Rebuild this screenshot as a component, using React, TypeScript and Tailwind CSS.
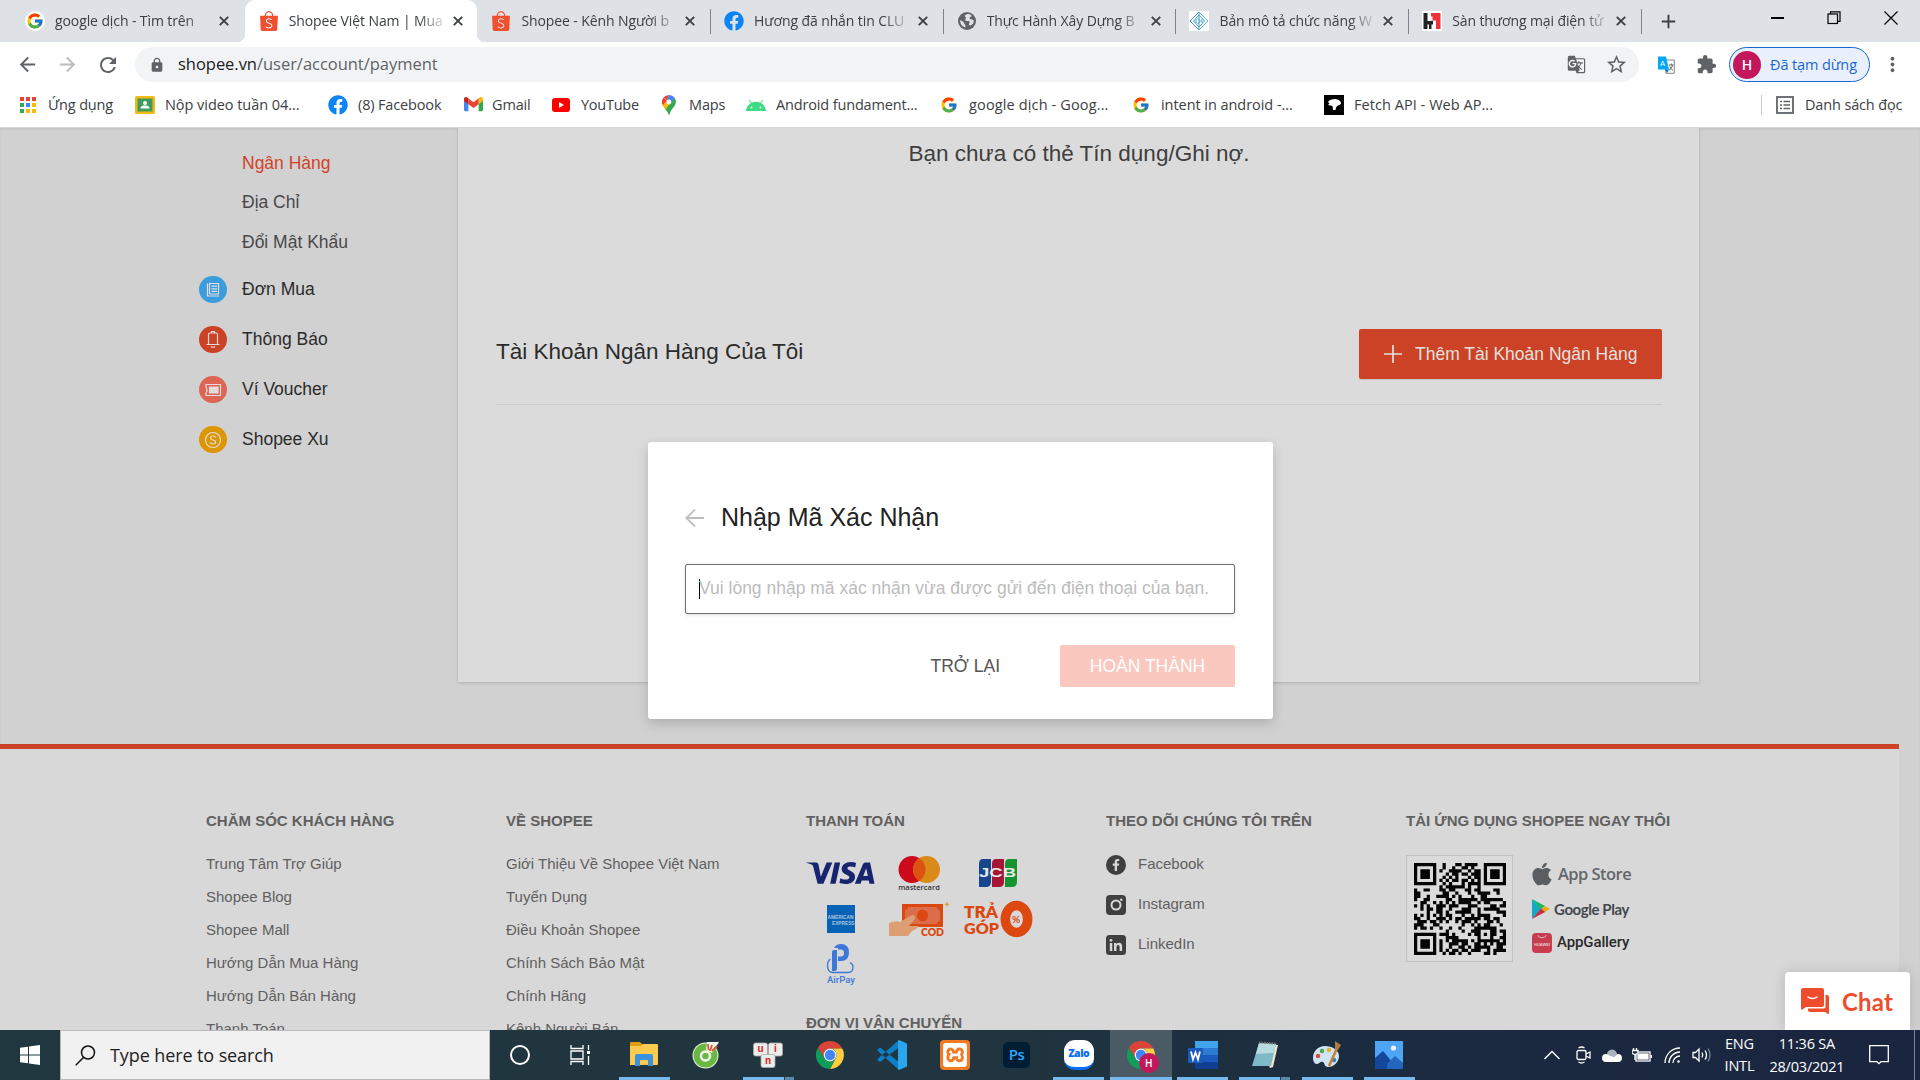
import React from "react";
import { FcGoogle } from "react-icons/fc";
import {
  MdArrowBack,
  MdArrowForward,
  MdRefresh,
  MdLock,
  MdStarBorder,
  MdExtension,
  MdMoreVert,
  MdGTranslate,
  MdAdd,
} from "react-icons/md";
import { FaFacebook, FaApple, FaFacebookF } from "react-icons/fa";
import { SiShopee, SiVisa, SiXampp } from "react-icons/si";

const ui = "font-['Open_Sans','Noto_Sans',sans-serif]";

/* ---------- logos ---------- */

function ChromeLogo({ className }: { className?: string }) {
  return (
    <svg viewBox="0 0 24 24" className={className}>
      <path d="M1.6 6A12 12 0 0 1 22.6 6.5H12A5.5 5.5 0 0 0 7.2 14.75Z" fill="#db4437" />
      <path d="M22.6 6.5A12 12 0 0 1 12 24L16.8 14.75A5.5 5.5 0 0 0 12 6.5Z" fill="#ffcd40" />
      <path d="M12 24A12 12 0 0 1 1.6 6L7.2 14.75A5.5 5.5 0 0 0 16.8 14.75Z" fill="#0f9d58" />
      <circle cx="12" cy="12" r="5.5" fill="#f1f1f1" />
      <circle cx="12" cy="12" r="4.4" fill="#4285f4" />
    </svg>
  );
}

function GlobeIcon() {
  return (
    <svg viewBox="0 0 20 20" className="size-5">
      <circle cx="10" cy="10" r="9" fill="#5f6368" />
      <path d="M10.5 3c-3 1-3.500 2-2 3 1.500 1-1 2 0 3.500 1 1 3 0 4 1 .8 1-1 2-.5 3.500l2 .5c2-1.500 3-3 2.800-5-.8-.3-1.500-1.300-2.500-1.300-1.200 0-2-.8-1.500-1.800.5-1 1.500-.7 2-1.500-1-1.500-2.800-2-4.300-1.900zM3.200 9c1 .8 2.500 1 3.300 2 .7 1 .5 1.800 1.500 2.500.7.600.5 1.500.5 2.800-3.500-.5-5.600-3.800-5.300-7.300z" fill="#dee1e6" />
    </svg>
  );
}

function DiamondIcon() {
  return (
    <svg viewBox="0 0 20 20" className="size-5 bg-white" fill="none" strokeWidth="1">
      <path d="M10 1L1 10l9 9" stroke="#4a86c0" />
      <path d="M10 1l9 9-9 9" stroke="#4cc0dc" />
      <path d="M10 4l-5.500 6L10 16l5.500-6zM10 2v16M7 8v4M13 8v4M8.500 7l3 3-3 3" stroke="#4a9fc8" />
    </svg>
  );
}

function HIcon() {
  return (
    <svg viewBox="0 0 20 20" className="size-5">
      <rect width="20" height="20" fill="#fff" />
      <path d="M1.500 2h4v8h5.500v3.500H9.500V18H1.500z" fill="#222" />
      <path d="M9 2h9.500v16h-4.500V9.500H9z" fill="#ee3338" />
      <path d="M5.500 13.500H7V18H5.500zM9 5.500h1.500V9.500H9z" fill="#fff" />
    </svg>
  );
}

function AndroidIcon() {
  return (
    <svg viewBox="0 0 20 12" className="w-5">
      <path d="M0 12a10 10 0 0 1 4.800-7.800L3 1.200l.8-.5 1.800 3.100a11 11 0 0 1 8.800 0L16.200.7l.8.5-1.800 3A10 10 0 0 1 20 12z" fill="#3ddc84" />
      <circle cx="5.500" cy="8.500" r=".9" fill="#fff" />
      <circle cx="14.500" cy="8.500" r=".9" fill="#fff" />
    </svg>
  );
}

function AppsIcon() {
  const colors = ["#ea4335", "#ea4335", "#ea4335", "#34a853", "#4285f4", "#fbbc04", "#34a853", "#fbbc04", "#fbbc04"];
  return (
    <div className="grid grid-cols-3 gap-[2px]">
      {colors.map((c, i) => (
        <span key={i} className="size-1" style={{ background: c }} />
      ))}
    </div>
  );
}

function ClassroomIcon() {
  return (
    <svg viewBox="0 0 20 20" className="size-5">
      <rect y="1" width="20" height="18" rx="1.500" fill="#f4b912" />
      <rect x="2.500" y="3.500" width="15" height="13" fill="#3f9b5c" />
      <circle cx="10" cy="8" r="2" fill="#fff" />
      <path d="M5.500 13.500c0-2.500 2-3 4.500-3s4.500.5 4.500 3z" fill="#fff" />
    </svg>
  );
}

function GmailIcon() {
  return (
    <svg viewBox="0 0 24 18" className="w-[19px]">
      <path d="M0 3v13.500C0 17.300.7 18 1.600 18H5.500V7z" fill="#4285f4" />
      <path d="M18.500 7v11h3.900c.9 0 1.600-.7 1.600-1.500V3z" fill="#34a853" />
      <path d="M18.500 1.600V9L24 5V2.500c0-2-2.400-3.200-4-2z" fill="#fbbc04" />
      <path d="M5.500 9V1.600L12 6.500l6.500-4.900V9L12 13.800z" fill="#ea4335" />
      <path d="M0 2.500V5l5.500 4V1.600L4 .5c-1.600-1.200-4 0-4 2z" fill="#c5221f" />
    </svg>
  );
}

function YoutubeIcon() {
  return (
    <svg viewBox="0 0 18 14" className="w-[18px]">
      <rect width="18" height="14" rx="3" fill="#f00" />
      <path d="M7 4l5 3-5 3z" fill="#fff" />
    </svg>
  );
}

function MapsIcon() {
  return (
    <svg viewBox="0 0 14 20" className="h-5">
      <path d="M7 0a7 7 0 0 0-5.400 2.500L5 5.400z" fill="#ea4335" />
      <path d="M7 0l-2 5.400 4 3L12.800 3A7 7 0 0 0 7 0z" fill="#4285f4" />
      <path d="M1.600 2.500A7 7 0 0 0 .8 10.500L5 6z" fill="#ea4335" />
      <path d="M.8 10.500c.6 1.300 1.600 2.600 2.600 4l6-6.500L5 5.800z" fill="#fbbc04" />
      <path d="M12.800 3c2 3.500 1 6.500-1 9C9.500 14.800 8.500 16 7.500 19.500c-.3.7-.7.700-1 0-.6-2-1.600-3.500-3.100-5z" fill="#34a853" />
      <circle cx="7" cy="7" r="2.400" fill="#fff" />
    </svg>
  );
}

function MdnIcon() {
  return (
    <svg viewBox="0 0 20 20" className="size-5">
      <rect width="20" height="20" fill="#000" />
      <path d="M4 7c1-2 4-3 7-3 3 .2 6 2 6 4 0 1.500-2 2-3 2.500-1.500.8-2 2-2.500 4.500H9l-.5-4L4 10l1.500-1.500z" fill="#fff" />
    </svg>
  );
}

function ListIcon() {
  return (
    <svg viewBox="0 0 18 18" className="size-[18px]" fill="none" stroke="#5f6368" strokeWidth="1.800">
      <rect x="1" y="1" width="16" height="16" />
      <path d="M4 5.500h2M7.500 5.500H14M4 9h2M7.500 9H14M4 12.500h2M7.500 12.500H14" strokeWidth="1.500" />
    </svg>
  );
}

function TranslateExt() {
  return (
    <svg viewBox="0 0 18 18" className="size-[18px]">
      <path d="M8 4h9.300v13.300H9z" fill="#fff" stroke="#666" strokeWidth=".8" />
      <path d="M12 9h4.500M14.300 7.500V9M15.500 9c-.5 3-2 4.500-3.500 5M13 10.500c.6 1.800 1.500 3 3 3.800" stroke="#555" strokeWidth=".9" fill="none" />
      <path d="M1 .5h8l3 13H1z" fill="#03a9f4" />
      <path d="M8 13.500h4L10 17z" fill="#0277bd" />
      <text x="3" y="10" fontSize="8" fill="#fff" fontFamily="Open Sans">A</text>
    </svg>
  );
}

/* ---------- browser chrome ---------- */

const tabs: { title: string; icon: React.ReactNode; active?: boolean; sep?: boolean }[] = [
  { title: "google dịch - Tìm trên", icon: <span className="-ml-[1px] flex size-5 items-center justify-center rounded-full bg-white"><FcGoogle size={18} /></span> },
  { title: "Shopee Việt Nam | Mua", icon: <SiShopee size={20} color="#f1502f" />, active: true },
  { title: "Shopee - Kênh Người b", icon: <SiShopee size={20} color="#f1502f" />, sep: true },
  { title: "Hương đã nhắn tin CLU", icon: <FaFacebook size={20} color="#0d84f5" />, sep: true },
  { title: "Thực Hành Xây Dựng B", icon: <GlobeIcon />, sep: true },
  { title: "Bản mô tả chức năng W", icon: <DiamondIcon />, sep: true },
  { title: "Sàn thương mại điện tử", icon: <HIcon />, sep: true },
];

function CloseX() {
  return (
    <svg viewBox="0 0 10 10" className="size-[10px]" stroke="#3c4043" strokeWidth="1.900">
      <path d="M.8.8l8.400 8.400M9.200.8L.8 9.200" />
    </svg>
  );
}

function TabStrip() {
  return (
    <div className="flex h-[42px] bg-[#dee1e6] pl-3">
      {tabs.map((t, i) => (
        <div key={i} className={"relative flex h-[42px] w-[232.7px] shrink-0 items-center pl-[14px] " + (t.active ? "rounded-t-[10px] bg-white" : "")}>
          {t.active && (
            <>
              <span className="absolute -left-2 bottom-0 size-2 bg-[radial-gradient(circle_at_0_0,#dee1e6_8px,#fff_8.500px)]" />
              <span className="absolute -right-2 bottom-0 size-2 bg-[radial-gradient(circle_at_100%_0,#dee1e6_8px,#fff_8.500px)]" />
            </>
          )}
          {t.icon}
          <span className="ml-[10px] w-[158px] whitespace-nowrap text-[14px] leading-6 tracking-[-0.1px] text-[#3c4043] [mask-image:linear-gradient(to_right,#000_82%,transparent_101%)]">
            {t.title}
          </span>
          <span className="ml-[6px]"><CloseX /></span>
          {t.sep && <span className="absolute -right-px top-[9px] h-[25px] w-px bg-[#808387]" />}
        </div>
      ))}
      <div className="ml-4 flex items-center">
        <MdAdd size={23} color="#3c4043" />
      </div>
      <div className="ml-[91px] flex h-9 items-center">
        <span className="h-[1.500px] w-[13px] bg-black" />
        <svg viewBox="0 0 14 14" className="ml-[43px] size-[14px]" fill="none" stroke="#000" strokeWidth="1.200">
          <rect x="1" y="3" width="9.500" height="9.500" />
          <path d="M3.500 3V.8H13v9.500h-2.500" />
        </svg>
        <svg viewBox="0 0 14 14" className="ml-[43px] size-[14px]" stroke="#000" strokeWidth="1.200">
          <path d="M.5.5l13 13M13.500.5l-13 13" />
        </svg>
      </div>
    </div>
  );
}

function Toolbar() {
  return (
    <div className="flex h-[45px] items-center bg-white pl-[16px]">
      <MdArrowBack size={23} color="#5f6368" />
      <MdArrowForward size={23} color="#babcbe" className="ml-[17px]" />
      <MdRefresh size={24} color="#5f6368" className="ml-[17px]" />
      <div className="ml-[15px] flex h-[35px] w-[1504px] items-center rounded-full bg-[#f1f3f4] pl-[14px]">
        <MdLock size={16} color="#5f6368" />
        <span className="ml-[13px] text-[16.500px] tracking-[-0.03px] text-[#5f6368]">
          <span className="text-[#202124]">shopee.vn</span>/user/account/payment
        </span>
        <span className="flex-1" />
        <MdGTranslate size={19} color="#5f6368" />
        <MdStarBorder size={23} color="#5f6368" className="ml-[19px] mr-[11px]" />
      </div>
      <span className="ml-[18px]"><TranslateExt /></span>
      <MdExtension size={21} color="#5f6368" className="ml-[21px]" />
      <div className="ml-[12px] flex h-[35px] w-[141px] items-center rounded-full border-[1.500px] border-[#1967d2] bg-[#e9f0fc] pl-[3px]">
        <span className="flex size-7 items-center justify-center rounded-full bg-[#c2185b] text-[14px] font-semibold text-white">H</span>
        <span className="ml-[9px] whitespace-nowrap text-[14.500px] tracking-[-0.1px] text-[#1967d2]">Đã tạm dừng</span>
      </div>
      <MdMoreVert size={23} color="#5f6368" className="ml-[11px]" />
    </div>
  );
}

const bookmarks: { label: string; icon: React.ReactNode; w: string; iw: string }[] = [
  { label: "Ứng dụng", icon: <AppsIcon />, w: "w-[115px]", iw: "w-[28px]" },
  { label: "Nộp video tuần 04...", icon: <ClassroomIcon />, w: "w-[193px] tracking-[-0.05px]", iw: "w-[30px]" },
  { label: "(8) Facebook", icon: <FaFacebook size={20} color="#0d84f5" />, w: "w-[136px]", iw: "w-[30px]" },
  { label: "Gmail", icon: <GmailIcon />, w: "w-[88px]", iw: "w-[28px]" },
  { label: "YouTube", icon: <YoutubeIcon />, w: "w-[110px] tracking-[-0.25px]", iw: "w-[29px]" },
  { label: "Maps", icon: <MapsIcon />, w: "w-[84px]", iw: "w-[27px]" },
  { label: "Android fundament...", icon: <AndroidIcon />, w: "w-[194px]", iw: "w-[30px]" },
  { label: "google dịch - Goog...", icon: <FcGoogle size={18} />, w: "w-[192px] tracking-[0.14px]", iw: "w-[29px]" },
  { label: "intent in android -...", icon: <FcGoogle size={18} />, w: "w-[192px] tracking-[-0.05px]", iw: "w-[29px]" },
  { label: "Fetch API - Web AP...", icon: <MdnIcon />, w: "w-[200px] tracking-[0.05px]", iw: "w-[30px]" },
];

function BookmarkBar() {
  return (
    <div className="flex h-[41px] items-center border-b border-[#d5d6d9] bg-white pb-[5px] pl-5 text-[14.500px] tracking-[-0.15px] text-[#3c4043]">
      {bookmarks.map((b, i) => (
        <div key={i} className={"flex shrink-0 items-center whitespace-nowrap " + b.w}>
          <span className={"flex shrink-0 items-center " + b.iw}>{b.icon}</span>
          {b.label}
        </div>
      ))}
      <span className="ml-[237px] h-5 w-px bg-[#c4c7ca]" />
      <span className="ml-[14px]"><ListIcon /></span>
      <span className="ml-[11px] whitespace-nowrap">Danh sách đọc</span>
    </div>
  );
}

/* ---------- page ---------- */

const menu: { label: string; bg: string; icon: React.ReactNode }[] = [
  {
    label: "Đơn Mua", bg: "bg-[#3b9ddd]",
    icon: <path d="M8.500 7.500V20H20M10.500 7.500H19.500V18H10.500zM12.500 10.200h5.500M12.500 12.800h5.500M12.500 15.400h5.500" />,
  },
  {
    label: "Thông Báo", bg: "bg-[#cc4227]",
    icon: <path d="M9.500 18V8.500Q9.500 7 11 7h6Q18.500 7 18.500 8.500V18M7.500 18.500h13M12.500 7V5.500h3V7M12 20.500q2 1.500 4 0" />,
  },
  {
    label: "Ví Voucher", bg: "bg-[#dc6553]",
    icon: <><path d="M7 8.500h14.500v11H7v-2.500q2-3 0-6z" /><path d="M10.500 11h8.500v6h-8.500z" fill="#e3dcda" /></>,
  },
  {
    label: "Shopee Xu", bg: "bg-[#dc9600]",
    icon: <><circle cx="14" cy="14" r="7.500" /><path d="M16.500 11.500c-.3-1-1.200-1.500-2.500-1.500s-2.500.7-2.500 1.900c0 2.700 5.200 1.500 5.200 4.200 0 1.200-1.200 1.900-2.700 1.900s-2.500-.6-2.800-1.800" /></>,
  },
];

function Sidebar() {
  return (
    <aside className="w-[458px] shrink-0 pl-[199px] text-[17.500px] text-[#2b2b2b]">
      <div className="flex h-[137px] flex-col pl-[43px] pt-[15px] text-[#494949]">
        <span className="h-10 leading-10 text-[#d0432a]">Ngân Hàng</span>
        <span className="h-[39px] leading-[39px]">Địa Chỉ</span>
        <span className="h-10 leading-10">Đổi Mật Khẩu</span>
      </div>
      {menu.map((m) => (
        <div key={m.label} className="flex h-[50px] items-center">
          <span className={"mr-[15px] -mt-px flex h-[27px] w-7 items-center justify-center rounded-full " + m.bg}>
            <svg viewBox="0 0 28 28" className="size-7" fill="none" stroke="#e3dcda" strokeWidth="1.200">{m.icon}</svg>
          </span>
          <span className="-mt-[2px]">{m.label}</span>
        </div>
      ))}
    </aside>
  );
}

function BankCard() {
  return (
    <section className="h-[554px] w-[1241px] bg-[#dbdbdb] pl-[38px] pr-[37px] shadow-[0_1px_3px_rgba(0,0,0,0.18)]">
      <p className="h-[201px] pt-[12px] text-center text-[22.500px] leading-[28px] text-[#3e3e3e]">
        Bạn chưa có thẻ Tín dụng/Ghi nợ.
      </p>
      <div className="flex h-[76px] items-start justify-between border-b border-[#cbcbcb]">
        <h2 className="text-[22.500px] leading-[45px] text-[#2b2b2b]">Tài Khoản Ngân Hàng Của Tôi</h2>
        <button className="flex h-[50px] w-[303px] items-center rounded-[2px] bg-[#cc4227] pl-[25px] text-[17.500px] text-[#e3e0df] shadow-[0_1px_1px_rgba(0,0,0,0.1)]">
          <svg viewBox="0 0 18 18" className="mr-[13px] size-[18px]" stroke="#e3e0df" strokeWidth="1.700"><path d="M9 0v18M0 9h18" /></svg>
          Thêm Tài Khoản Ngân Hàng
        </button>
      </div>
    </section>
  );
}

const colA = ["Trung Tâm Trợ Giúp", "Shopee Blog", "Shopee Mall", "Hướng Dẫn Mua Hàng", "Hướng Dẫn Bán Hàng", "Thanh Toán"];
const colB = ["Giới Thiệu Về Shopee Việt Nam", "Tuyển Dụng", "Điều Khoản Shopee", "Chính Sách Bảo Mật", "Chính Hãng", "Kênh Người Bán"];

function Heading({ children }: { children: React.ReactNode }) {
  return <h3 className="h-[24px] whitespace-nowrap text-[15px] font-bold leading-6 text-[#606060]">{children}</h3>;
}

function LinkColumn({ title, links }: { title: string; links: string[] }) {
  return (
    <div>
      <Heading>{title}</Heading>
      <ul className="mt-[14px]">
        {links.map((l) => (
          <li key={l} className="h-[33px] whitespace-nowrap leading-[33px]">{l}</li>
        ))}
      </ul>
    </div>
  );
}

function Payments() {
  return (
    <div>
      <Heading>THANH TOÁN</Heading>
      <div className="mt-[17px] grid w-[240px] grid-cols-[69px_87px_71px] grid-rows-[46px_46px_46px] items-center justify-items-center">
        <SiVisa className="h-[68px] w-[69px]" color="#17256f" />
        <svg viewBox="0 0 44 36" className="h-9 w-11">
          <circle cx="15" cy="14.500" r="13.500" fill="#cc0a1b" />
          <circle cx="29.500" cy="14.500" r="13.500" fill="#d98a18" />
          <path d="M22.250 3.100a13.500 13.500 0 0 1 0 22.800a13.500 13.500 0 0 1 0-22.800z" fill="#dc5210" />
          <text x="22" y="34.500" textAnchor="middle" fontSize="7.500" fontWeight="600" fontFamily="Open Sans" fill="#333">mastercard</text>
        </svg>
        <svg viewBox="0 0 40 28" className="h-7 w-10">
          <path d="M5 0h8v23q0 5-5 5H1V5q0-5 4-5z" fill="#16478c" />
          <path d="M18 0h8v23q0 5-5 5h-7V5q0-5 4-5z" fill="#a61536" />
          <path d="M31 0h8v23q0 5-5 5h-7V5q0-5 4-5z" fill="#169432" />
          <text x="1" y="18" fontSize="12" fontWeight="700" textLength="37" lengthAdjust="spacingAndGlyphs" fontFamily="Liberation Sans" fill="#e8e8e8">JCB</text>
        </svg>
        <svg viewBox="0 0 28 28" className="size-7">
          <rect width="28" height="28" fill="#0862b5" />
          <text x=".5" y="14" fontSize="5.500" fontWeight="700" textLength="26" lengthAdjust="spacingAndGlyphs" fontFamily="Liberation Sans" fill="#a9c6e0">AMERICAN</text>
          <text x="5" y="19.500" fontSize="5.500" fontWeight="700" textLength="22.500" lengthAdjust="spacingAndGlyphs" fontFamily="Liberation Sans" fill="#a9c6e0">EXPRESS</text>
        </svg>
        <svg viewBox="0 0 61 36" className="h-9 w-[61px]">
          <rect x="14" y="3" width="41" height="23" fill="#dc480f" />
          <path d="M20 6h29q0 3 3 3v11q-3 0-3 3H20q0-3-3-3V9q3 0 3-3z" fill="#db6d4b" />
          <ellipse cx="34.500" cy="14.500" rx="5.500" ry="6" fill="#dc480f" />
          <path d="M1 22q7-3 11-1l12-7q4 0 3 4l-6 7h10q-2 3-7 5l-4 5H1z" fill="#dc9e72" />
          <text x="33" y="35" fontSize="10.500" fontWeight="800" textLength="23" lengthAdjust="spacingAndGlyphs" fontFamily="Lato" fill="#dc480f">COD</text>
          <path d="M59 .5l.8 2 2 .8-2 .8-.8 2-.8-2-2-.8 2-.8z" fill="#dc9e20" />
        </svg>
        <svg viewBox="0 0 70 38" className="h-[38px] w-[70px]">
          <text x="1" y="17.500" fontSize="16" fontWeight="800" textLength="34" lengthAdjust="spacingAndGlyphs" fontFamily="Lato" fill="#dc480f">TRẢ</text>
          <text x="1" y="34" fontSize="15" fontWeight="800" textLength="35" lengthAdjust="spacingAndGlyphs" fontFamily="Lato" fill="#dc480f">GÓP</text>
          <ellipse cx="53.500" cy="19" rx="11.200" ry="13.500" fill="none" stroke="#dc480f" strokeWidth="9.500" />
          <text x="49" y="23" fontSize="10" fontWeight="700" fontFamily="Lato" fill="#dc480f">%</text>
        </svg>
        <svg viewBox="0 0 30 44" className="h-[44px] w-[30px]" fill="none">
          <path d="M6 28V9q0-2 2-2h3v18q0 3-2.500 3z" fill="#3d78d8" />
          <path d="M8 5q2-4 7-4 8 0 8 8.500T15 18h-3v-4.500h3q3 0 3-3.500t-3-3.500h-3V5z" fill="#3d78d8" />
          <path d="M4.500 16q-3 2-3 6.500 0 7 5.500 7h15q5 0 5-5.500 0-3-3-4.500" stroke="#3d78d8" strokeWidth="1.300" />
          <text x="1" y="40" fontSize="9" fontWeight="500" textLength="28" lengthAdjust="spacingAndGlyphs" fontFamily="Roboto" fill="#3d78d8">AirPay</text>
        </svg>
      </div>
      <div className="mt-[23px] h-8"><Heading>ĐƠN VỊ VẬN CHUYỂN</Heading></div>
    </div>
  );
}

function Social() {
  const box = "flex size-5 items-center justify-center";
  return (
    <div>
      <Heading>THEO DÕI CHÚNG TÔI TRÊN</Heading>
      <ul className="mt-[12px]">
        <li className="flex h-10 items-center gap-3">
          <span className={box + " rounded-full bg-[#3f3f3f]"}><FaFacebookF size={12} color="#d8d8d8" /></span>
          <span className="-mt-[2px]">Facebook</span>
        </li>
        <li className="flex h-10 items-center gap-3">
          <svg viewBox="0 0 20 20" className="size-5">
            <rect width="20" height="20" rx="4" fill="#3f3f3f" />
            <circle cx="10" cy="10" r="4.500" fill="none" stroke="#d8d8d8" strokeWidth="2" />
            <circle cx="15.300" cy="4.700" r="1.200" fill="#d8d8d8" />
          </svg>
          <span className="-mt-[2px]">Instagram</span>
        </li>
        <li className="flex h-10 items-center gap-3">
          <svg viewBox="0 0 20 20" className="size-5">
            <rect width="20" height="20" rx="3.500" fill="#3f3f3f" />
            <path d="M3.800 8h2.500v8H3.800zM8 8h2.400v1.200q1-1.400 2.700-1.400 3 0 3 3.600V16h-2.500v-4.200q0-1.800-1.400-1.800-1.700 0-1.700 2V16H8z" fill="#d8d8d8" />
            <circle cx="5" cy="5.300" r="1.400" fill="#d8d8d8" />
          </svg>
          <span className="-mt-[2px]">LinkedIn</span>
        </li>
      </ul>
    </div>
  );
}

const QR_SIZE = 29;

function qrCell(x: number, y: number): boolean {
  const finder = (fx: number, fy: number): boolean | null => {
    const dx = x - fx;
    const dy = y - fy;
    if (dx < -1 || dx > 7 || dy < -1 || dy > 7) return null;
    const ring = Math.max(Math.abs(dx - 3), Math.abs(dy - 3));
    return ring === 3 || ring <= 1;
  };
  for (const [fx, fy] of [[0, 0], [22, 0], [0, 22]]) {
    const f = finder(fx, fy);
    if (f !== null) return f;
  }
  const ring = Math.max(Math.abs(x - 22), Math.abs(y - 22));
  if (ring <= 2) return ring !== 1;
  let h = (x * 374761393 + y * 668265263) | 0;
  h = Math.imul(h ^ (h >>> 13), 1274126177);
  return ((h ^ (h >>> 16)) & 255) < 132;
}

function QrCode() {
  let d = "";
  for (let y = 0; y < QR_SIZE; y++)
    for (let x = 0; x < QR_SIZE; x++) if (qrCell(x, y)) d += `M${x} ${y}h1.020v1.020h-1.020z`;
  return (
    <svg viewBox="0 0 29 29" className="size-[92px]"><path d={d} fill="#050505" /></svg>
  );
}

function Downloads() {
  return (
    <div>
      <Heading>TẢI ỨNG DỤNG SHOPEE NGAY THÔI</Heading>
      <div className="mt-[22px] flex">
        <div className="flex h-[107px] w-[107px] items-center justify-center border border-[#c2c2c2] bg-[#dbdbdb]"><QrCode /></div>
        <div className="ml-[19px] flex flex-col">
          <div className="flex h-[37px] items-center">
            <FaApple className="h-[26px] w-[20px]" color="#5a5d62" />
            <span className={"ml-[6px] mt-[2px] whitespace-nowrap text-[16.500px] font-semibold tracking-[-0.55px] text-[#63666b] " + ui}>App Store</span>
          </div>
          <div className="flex h-[34px] items-center">
            <svg viewBox="0 0 18 20" className="h-5 w-[18px]">
              <path d="M0 0v20l9-10z" fill="#14a9c9" />
              <path d="M0 0l13 7-4 3.500z" fill="#17b765" />
              <path d="M12.500 6.700L18 10l-5.500 3.300L9 10z" fill="#dcaf12" />
              <path d="M0 20l13-7-4-3.500z" fill="#c92c42" />
            </svg>
            <span className="ml-[4px] whitespace-nowrap font-[Lato,sans-serif] text-[15px] font-bold tracking-[-0.42px] text-[#44484c]">Google Play</span>
          </div>
          <div className="flex h-[33px] items-center">
            <svg viewBox="0 0 20 20" className="size-5">
              <rect width="20" height="20" rx="4" fill="#c83c50" />
              <path d="M5.500 2.500q4.500 4.500 9 0" fill="none" stroke="#e5b8be" />
              <text x="2" y="12.500" fontSize="4" fontWeight="700" textLength="16" lengthAdjust="spacingAndGlyphs" fontFamily="Liberation Sans" fill="#e5c8cc">HUAWEI</text>
            </svg>
            <span className="ml-[5px] whitespace-nowrap font-[Roboto,sans-serif] text-[15px] font-medium tracking-[-0.12px] text-[#2a2a2a]">AppGallery</span>
          </div>
        </div>
      </div>
    </div>
  );
}

function Modal() {
  return (
    <div className="absolute left-[648px] top-[314px] flex h-[277px] w-[625px] flex-col rounded-[3px] bg-white pl-[37px] pr-[38px] pt-[57px] shadow-[0_4px_12px_rgba(0,0,0,0.18)]">
      <div className="flex h-9 items-center">
        <svg viewBox="0 0 19 18" className="mt-[2px] h-[18px] w-[19px]" fill="none" stroke="#bdbdbd" strokeWidth="1.800">
          <path d="M10 .7L1.300 9l8.700 8.300M1.300 9H19" />
        </svg>
        <h2 className="ml-[17px] text-[25px] leading-9 text-[#222]">Nhập Mã Xác Nhận</h2>
      </div>
      <div className="mt-[29px] flex h-[50px] items-center rounded-[2px] border border-[#6f6f6f] pl-[13px] shadow-[0_1px_4px_rgba(0,0,0,0.12)]">
        <span className="h-5 w-px bg-black" />
        <span className="-ml-px -mt-[2px] whitespace-nowrap text-[17.500px] text-[#bcbcbc]">Vui lòng nhập mã xác nhận vừa được gửi đến điện thoại của bạn.</span>
      </div>
      <div className="mt-[31px] flex h-[42px] items-center justify-end text-[17.500px]">
        <span className="mr-[60px] text-[#555]">TRỞ LẠI</span>
        <button className="h-[42px] w-[175px] rounded-[2px] bg-[#fac8be] text-white">HOÀN THÀNH</button>
      </div>
    </div>
  );
}

function ChatButton() {
  return (
    <div className="absolute bottom-0 left-[1785px] flex h-[58px] w-[125px] items-center rounded-t-[4px] bg-white pl-4 text-[#ee4d2d] shadow-[0_0_14px_rgba(0,0,0,0.15)]">
      <svg viewBox="0 0 28 26" className="h-[26px] w-7">
        <path d="M2 0h19q2 0 2 2v15q0 2-2 2H5l-3.500 2.500Q0 22 0 20.500V2Q0 0 2 0z" fill="currentColor" />
        <path d="M24.500 7H26q2 0 2 2v16q0 1.500-1.500.7L24.500 24H9q-2 0-2-2v-1.500h15.500q2 0 2-2z" fill="currentColor" />
        <path d="M7 9q4.500 3 9 0" stroke="#fff" strokeWidth="1.500" fill="none" strokeLinecap="round" />
      </svg>
      <span className="ml-[13px] mt-[2px] font-[Lato,sans-serif] text-[24px] font-bold leading-none tracking-[0.2px]">Chat</span>
    </div>
  );
}

function Page() {
  return (
    <main className="relative flex-1 overflow-hidden bg-[#d1d1d1] font-['Liberation_Sans',Arial,sans-serif] shadow-[inset_0_2px_2px_rgba(0,0,0,0.05)]">
      <div className="flex h-[616px]">
        <Sidebar />
        <BankCard />
      </div>
      <footer className="h-[290px] w-[1899px] overflow-hidden border-t-[5px] border-[#cb4227] bg-[#d8d8d8] pl-[206px] pt-[60px] text-[15px] text-[#606060]">
        <div className="grid grid-cols-[repeat(5,300px)]">
          <LinkColumn title="CHĂM SÓC KHÁCH HÀNG" links={colA} />
          <LinkColumn title="VỀ SHOPEE" links={colB} />
          <Payments />
          <Social />
          <Downloads />
        </div>
      </footer>
      <Modal />
      <ChatButton />
    </main>
  );
}

/* ---------- taskbar ---------- */

const taskApps: { name: string; icon: React.ReactNode; run?: boolean; multi?: boolean; active?: boolean }[] = [
  {
    name: "explorer", run: true,
    icon: <svg viewBox="0 0 28 26" className="h-[26px] w-7"><path d="M0 1q0-1 1-1h9l3 3v4H0z" fill="#e09c10" /><path d="M0 4h11l2-2h14q1 0 1 1v19q0 1-1 1H0z" fill="#fdcb50" /><path d="M5 24V14q0-2 2-2h14q2 0 2 2v10h-5v-5q0-1-1-1h-6q-1 0-1 1v5z" fill="#3a93dc" /></svg>,
  },
  {
    name: "coccoc",
    icon: <svg viewBox="0 0 28 28" className="size-7"><circle cx="13.500" cy="14.500" r="13" fill="#e8f5e0" /><circle cx="13.500" cy="14.500" r="12" fill="#69b844" /><path d="M14 9L15 1h12l-7 11z" fill="#f2f6ee" /><path d="M16 3l.5 6M20 4l-2 6M25 5l-5 5" stroke="#e0563a" strokeWidth="1.800" /><circle cx="13.500" cy="15" r="4.500" fill="none" stroke="#f0f8ec" strokeWidth="2.600" /></svg>,
  },
  {
    name: "unikey", run: true, multi: true,
    icon: <svg viewBox="0 0 30 26" className="h-[26px] w-[30px]" fontFamily="Liberation Sans" fontWeight="700" fontSize="10"><g fill="#ececec" stroke="#aaa" strokeWidth=".8"><rect x=".5" y="1" width="14" height="13" rx="2" /><rect x="15.500" y="1" width="14" height="13" rx="2" /><rect x="8" y="12.500" width="14" height="13" rx="2" /></g><g fill="#e02020"><text x="4.500" y="10">u</text><text x="21" y="10">i</text><text x="12" y="22">n</text></g></svg>,
  },
  { name: "chrome", icon: <ChromeLogo className="size-7" /> },
  {
    name: "vscode",
    icon: <svg viewBox="0 0 30 30" className="size-[30px]"><path d="M0 10l3-2.500L22 22v8L3 13zM0 19.500L3 22 22 7.500V0z" fill="#0d7fc7" /><path d="M22 0l8 3.500v23L22 30l-1-1V1z" fill="#2aa6ee" /></svg>,
  },
  {
    name: "xampp",
    icon: <span className="flex size-[30px] items-center justify-center rounded-[4px] bg-[#f27a24]"><SiXampp size={24} color="#fff" /></span>,
  },
  {
    name: "photoshop",
    icon: <span className="flex h-[26px] w-[27px] items-center justify-center rounded-[5px] bg-[#001d33] pb-px text-[15px] font-semibold tracking-[-0.3px] text-[#31a8ff]">Ps</span>,
  },
  {
    name: "zalo", run: true,
    icon: <span className="flex h-[30px] w-[30px] items-center justify-center rounded-[11px] border-b-[3px] border-[#0b6cf5] bg-white text-[10.500px] font-extrabold tracking-[-0.5px] text-[#0b6cf5]">Zalo</span>,
  },
  {
    name: "chrome-h", run: true, active: true,
    icon: <span className="relative"><ChromeLogo className="size-7" /><span className="absolute -bottom-[4px] -right-[4px] flex size-5 items-center justify-center rounded-full bg-[#c2185b] text-[10px] font-semibold text-white">H</span></span>,
  },
  {
    name: "word", run: true,
    icon: <svg viewBox="0 0 30 28" className="h-7 w-[30px]"><rect x="7" width="23" height="7" fill="#41a5ee" /><rect x="7" y="7" width="23" height="7" fill="#2b7cd3" /><rect x="7" y="14" width="23" height="7" fill="#185abd" /><rect x="7" y="21" width="23" height="7" fill="#103f91" /><rect y="7" width="15" height="15" rx="1" fill="#185abd" /><path d="M3 10.500l2 8 2.500-7 2.500 7 2-8" fill="none" stroke="#fff" strokeWidth="1.800" /></svg>,
  },
  {
    name: "notepad", run: true, multi: true,
    icon: <svg viewBox="0 0 28 28" className="size-7"><path d="M8 2l19 2-5 22-3 1z" fill="#efe8c8" /><path d="M8 2l17 1-5 22H1z" fill="#7fb9c8" /><path d="M8 2l17 1-2 9L5 13z" fill="#b8dbe2" /><path d="M8 1.500l17 1" stroke="#777" strokeWidth="2" strokeDasharray="1.500 1" /></svg>,
  },
  {
    name: "paint", run: true,
    icon: <svg viewBox="0 0 30 28" className="h-7 w-[30px]"><path d="M13 5C6 5 1 10 1 17c0 4 2 6 4 6 3 0 3-3 6-2 2 1 1 5 5 5 6 0 11-5 11-11C27 9 20 5 13 5z" fill="#cfe4f2" /><circle cx="6" cy="15" r="2.200" fill="#e0453a" /><circle cx="10" cy="10" r="2.200" fill="#52a845" /><circle cx="17" cy="9" r="2.200" fill="#e8b22c" /><circle cx="22" cy="19" r="2.200" fill="#3a78c8" /><path d="M26 5L17 25" stroke="#c98233" strokeWidth="2.600" /><path d="M23 0l6 4-3 5-3-1z" fill="#b07a45" /></svg>,
  },
  {
    name: "photos", run: true,
    icon: <svg viewBox="0 0 28 28" className="size-7"><rect width="28" height="28" fill="#4ea5f5" /><circle cx="18.500" cy="7" r="2.600" fill="#f4eefa" /><path d="M0 17l8-7 15 18H0z" fill="#12479c" /><path d="M12 23l8-8 8 7v6H12z" fill="#2465c0" /></svg>,
  },
];

function Taskbar() {
  const line = { fill: "none", stroke: "#fff", strokeWidth: 1.3 };
  return (
    <div className="flex h-[50px] shrink-0 bg-[linear-gradient(to_right,#21373f,#20353f_50%,#1b2a40_75%,#1a2540)] text-white">
      <div className="flex w-[60px] items-center justify-center">
        <svg viewBox="0 0 20 20" className="size-5" fill="#fff"><path d="M0 2.800l8-1.100v7.800H0zM9 1.600L20 0v9.500H9zM0 10.500h8v7.800L0 17.200zM9 10.500h11V20L9 18.400z" /></svg>
      </div>
      <div className="flex w-[430px] items-center border border-[#b9b9b9] bg-[#f1f1f1] pl-[14px] text-[18px] tracking-[-0.1px] text-[#222]">
        <svg viewBox="0 0 21 21" className="mr-[14px] size-[21px]" fill="none" stroke="#111" strokeWidth="1.500"><circle cx="13" cy="7.500" r="6.500" /><path d="M8.500 12.500L.7 20.300" /></svg>
        Type here to search
      </div>
      <div className="flex w-[60px] items-center justify-center">
        <span className="size-5 rounded-full border-[2.500px] border-white" />
      </div>
      <div className="flex w-[62px] items-center justify-center">
        <svg viewBox="0 0 21 20" className="-ml-[2px] h-5 w-[21px]" {...line}><path d="M1 0v3.500h12V0M1 20v-3.500h12V20M1 6h12v8H1zM18.500 0v5M18.500 11v9" /><path d="M17 6h3v3h-3z" fill="#fff" stroke="none" /></svg>
      </div>
      <div className="ml-px flex">
        {taskApps.map((a) => (
          <div key={a.name} className={"relative flex w-[62.100px] shrink-0 items-center justify-center " + (a.active ? "bg-[#4b5b66]" : "")}>
            {a.icon}
            {a.run && (
              <span className={"absolute bottom-0 flex h-[3px] " + (a.active ? "w-full" : "w-[51px]")}>
                <span className="flex-1 bg-[#76b9ed]" />
                {a.multi && <span className="w-[10px] border-l border-[#2a3c4a] bg-[#5a86a8]" />}
              </span>
            )}
          </div>
        ))}
      </div>
      <div className="ml-[123.700px] flex items-center">
        <svg viewBox="0 0 16 10" className="h-[10px] w-4" {...line}><path d="M.5 9L8 1.500 15.500 9" /></svg>
        <svg viewBox="0 0 15 18" className="ml-4 h-[18px] w-[15px]" {...line}><rect x="1" y="4.500" width="9" height="9" rx="1.500" /><path d="M10 8l4-2v6l-4-2M2.500 2q3-2 6 0M2.500 16q3 2 6 0" /></svg>
        <svg viewBox="0 0 20 13" className="ml-[11px] h-[13px] w-5"><path d="M5 5a5 5 0 0 1 9.500-1.500L16 6l-8 4z" fill="#aab2bd" /><path d="M4 13a4 4 0 0 1 0-8q2 0 4 2l4 1 4-3a4 4 0 0 1 0 8z" fill="#fff" /></svg>
        <svg viewBox="0 0 20 15" className="ml-[10px] h-[15px] w-5" {...line}><rect x="4" y="4" width="14" height="9" /><rect x="6" y="6" width="10" height="5" fill="#fff" /><path d="M19.300 7v3" /><path d="M0 2.500h6v2q-1 2-3 2t-3-2zM1.500 0v2M4.500 0v2M3 6v6" fill="#1b2a40" /></svg>
        <svg viewBox="0 0 16 16" className="ml-3 size-4" {...line}><path d="M1 16A15 15 0 0 1 16 1M5 16A11 11 0 0 1 16 5M9 16a7 7 0 0 1 7-7" /><circle cx="14.500" cy="14.500" r="1.200" fill="#fff" stroke="none" /></svg>
        <svg viewBox="0 0 20 16" className="ml-3 h-4 w-5" {...line}><path d="M1 5.500h2.500L7 2v12l-3.500-3.500H1zM10 5.500q1.500 2.500 0 5M13 3.500q3 4.500 0 9" /><path d="M16 1.500q4 6.500 0 13" stroke="#7c8596" /></svg>
      </div>
      <div className="ml-[12px] flex w-[31px] flex-col items-center pt-[3px] text-[14.500px] leading-[22px] tracking-[-0.2px]">
        <div>ENG</div>
        <div>INTL</div>
      </div>
      <div className="ml-[14px] flex w-[76px] flex-col items-center whitespace-nowrap pt-[2px] text-[14.500px] leading-[23px] tracking-[-0.2px]">
        <div>11:36 SA</div>
        <div>28/03/2021</div>
      </div>
      <svg viewBox="0 0 20 20" className="ml-[24px] mt-[15px] h-5 w-5" {...line}><path d="M.7.700h18.600v16H12l-2 2-2-2H.7z" /></svg>
      <span className="ml-[25px] w-px bg-[#7b8494]" />
    </div>
  );
}

export default function App() {
  return (
    <div className={"flex h-[1080px] w-[1920px] flex-col overflow-hidden " + ui}>
      <TabStrip />
      <Toolbar />
      <BookmarkBar />
      <Page />
      <Taskbar />
    </div>
  );
}
